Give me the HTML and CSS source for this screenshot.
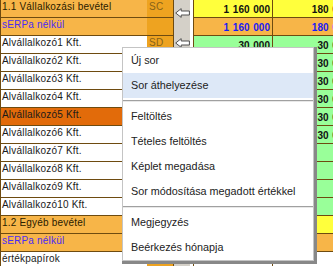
FILE: index.html
```html
<!DOCTYPE html>
<html lang="hu">
<head>
    <meta charset="UTF-8">
    <title>Bevételek</title>
    <link rel="stylesheet" href="styles.css">
</head>
<body>
    <div class="sheet">
        <div class="row">
            <div class="name group">1.1 Vállalkozási bevétel</div>
            <div class="code">SC</div>
            <div class="arrow"><svg class="arrow-low" width="15" height="10" viewBox="0 0 15 10"><path d="M0.7 5 L6.2 0.6 L6.2 3 L14.4 3 L14.4 7 L6.2 7 L6.2 9.4 Z"/></svg></div>
            <div class="gap"></div>
            <div class="num yellow">1 160 000</div>
            <div class="num yellow">180 000</div>
        </div>
        <div class="row">
            <div class="name group serpa">sERPa nélkül</div>
            <div class="code"></div>
            <div class="arrow"></div>
            <div class="gap"></div>
            <div class="num group blue">1 160 000</div>
            <div class="num group blue">180 000</div>
        </div>
        <div class="row">
            <div class="name">Alvállalkozó1 Kft.</div>
            <div class="code">SD</div>
            <div class="arrow"><svg class="arrow-high" width="15" height="10" viewBox="0 0 15 10"><path d="M0.7 5 L6.2 0.6 L6.2 3 L14.4 3 L14.4 7 L6.2 7 L6.2 9.4 Z"/></svg></div>
            <div class="gap"></div>
            <div class="num green">30 000</div>
            <div class="num green">30 000</div>
        </div>
        <div class="row">
            <div class="name">Alvállalkozó2 Kft.</div>
            <div class="code">SD</div>
            <div class="arrow"></div>
            <div class="gap"></div>
            <div class="num green">30 000</div>
            <div class="num green">30 000</div>
        </div>
        <div class="row">
            <div class="name">Alvállalkozó3 Kft.</div>
            <div class="code">SD</div>
            <div class="arrow"></div>
            <div class="gap"></div>
            <div class="num green">30 000</div>
            <div class="num green">30 000</div>
        </div>
        <div class="row">
            <div class="name">Alvállalkozó4 Kft.</div>
            <div class="code">SD</div>
            <div class="arrow"></div>
            <div class="gap"></div>
            <div class="num green">30 000</div>
            <div class="num green">30 000</div>
        </div>
        <div class="row">
            <div class="name selected">Alvállalkozó5 Kft.</div>
            <div class="code">SD</div>
            <div class="arrow"></div>
            <div class="gap"></div>
            <div class="num green">30 000</div>
            <div class="num green">30 000</div>
        </div>
        <div class="row">
            <div class="name">Alvállalkozó6 Kft.</div>
            <div class="code">SD</div>
            <div class="arrow"></div>
            <div class="gap"></div>
            <div class="num green">30 000</div>
            <div class="num green">30 000</div>
        </div>
        <div class="row">
            <div class="name">Alvállalkozó7 Kft.</div>
            <div class="code">SD</div>
            <div class="arrow"></div>
            <div class="gap"></div>
            <div class="num green"></div>
            <div class="num green"></div>
        </div>
        <div class="row">
            <div class="name">Alvállalkozó8 Kft.</div>
            <div class="code">SD</div>
            <div class="arrow"></div>
            <div class="gap"></div>
            <div class="num green"></div>
            <div class="num green"></div>
        </div>
        <div class="row">
            <div class="name">Alvállalkozó9 Kft.</div>
            <div class="code">SD</div>
            <div class="arrow"></div>
            <div class="gap"></div>
            <div class="num green"></div>
            <div class="num green"></div>
        </div>
        <div class="row">
            <div class="name">Alvállalkozó10 Kft.</div>
            <div class="code">SD</div>
            <div class="arrow"></div>
            <div class="gap"></div>
            <div class="num green"></div>
            <div class="num green"></div>
        </div>
        <div class="row">
            <div class="name group">1.2 Egyéb bevétel</div>
            <div class="code"></div>
            <div class="arrow"></div>
            <div class="gap"></div>
            <div class="num yellow"></div>
            <div class="num yellow"></div>
        </div>
        <div class="row">
            <div class="name group serpa">sERPa nélkül</div>
            <div class="code"></div>
            <div class="arrow"></div>
            <div class="gap"></div>
            <div class="num group"></div>
            <div class="num group"></div>
        </div>
        <div class="row">
            <div class="name">értékpapírok</div>
            <div class="code"></div>
            <div class="arrow"></div>
            <div class="gap"></div>
            <div class="num"></div>
            <div class="num"></div>
        </div>
    </div>

    <div class="menu">
        <div class="menu-item">Új sor</div>
        <div class="menu-item active">Sor áthelyezése</div>
        <div class="menu-sep"></div>
        <div class="menu-item">Feltöltés</div>
        <div class="menu-item">Tételes feltöltés</div>
        <div class="menu-item">Képlet megadása</div>
        <div class="menu-item">Sor módosítása megadott értékkel</div>
        <div class="menu-sep"></div>
        <div class="menu-item">Megjegyzés</div>
        <div class="menu-item">Beérkezés hónapja</div>
    </div>
</body>
</html>
```

FILE: styles.css
```css
body {
    margin: 0;
    font-family: "Liberation Sans", Arial, sans-serif;
    background: #fff;
    overflow: hidden;
}
.sheet {
    width: 351px;
}
.row {
    display: flex;
    height: 18px;
}
.row > div {
    box-sizing: border-box;
    height: 18px;
    flex-shrink: 0;
    white-space: nowrap;
}
.name {
    width: 147px;
    padding-left: 1px;
    border-left: 1px solid #6e4b10;
    border-bottom: 1px solid #6e4b10;
    font-size: 10px;
    letter-spacing: 0.2px;
    line-height: 13px;
    color: #1a1a1a;
}
.group {
    background: #f7b548;
}
.name.group {
    color: #2a2000;
}
.serpa.name {
    color: #4a2cf5;
}
.selected {
    background: #e26b0a;
}
.code {
    width: 27px;
    padding-left: 2px;
    background: #eea320;
    border-right: 1px solid #6e4b10;
    border-bottom: 1px solid #6e4b10;
    font-size: 10px;
    letter-spacing: 0.3px;
    line-height: 13px;
    color: #86621a;
}
.arrow {
    width: 16px;
    background: #d4d0c8;
}
.arrow svg {
    display: block;
    margin-left: 1px;
}
.arrow svg path {
    fill: #fff;
    stroke: #505050;
    stroke-width: 1;
}
.arrow-low {
    margin-top: 8px;
}
.arrow-high {
    margin-top: 2px;
}
.gap {
    width: 3px;
}
.num {
    width: 79px;
    padding: 3px 2px 0 0;
    border-left: 1px solid #6e4b10;
    border-bottom: 1px solid #6e4b10;
    text-align: right;
    font-size: 10px;
    font-weight: bold;
    word-spacing: 1px;
    line-height: 13px;
    color: #111;
}
.yellow {
    background: #ffff3c;
}
.green {
    background: #99ff99;
}
.blue {
    color: #1a1af5;
}
.menu {
    position: absolute;
    left: 122px;
    top: 47px;
    width: 190px;
    background: #fff;
    border: 1px solid #c4c4c4;
    box-shadow: 3px 3px 0 #888, 3px 0 0 #888, 0 3px 0 #888;
    font-size: 10.8px;
    color: #222;
}
.menu-item {
    height: 25px;
    line-height: 25px;
    padding-left: 8px;
    white-space: nowrap;
}
.menu-item.active {
    background: #dde8f7;
}
.menu-sep {
    margin: 2px 0;
    border-top: 1px solid #a0a0a0;
    border-bottom: 1px solid #e8e8e8;
}
```
